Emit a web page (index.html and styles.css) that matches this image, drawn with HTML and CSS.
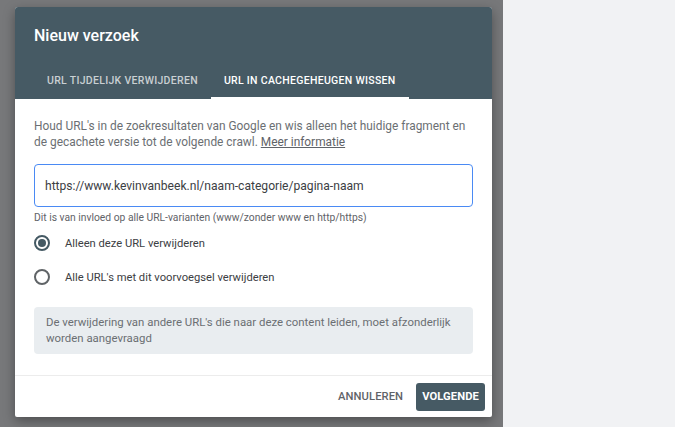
FILE: index.html
```html
<!DOCTYPE html>
<html lang="nl">
<head>
<meta charset="utf-8">
<title>Nieuw verzoek</title>
<link rel="stylesheet" href="styles.css">
</head>
<body>
<div class="page">
  <div class="backdrop">
    <div class="dialog">
      <div class="header">
        <h1 class="title">Nieuw verzoek</h1>
        <div class="tabs">
          <div class="tab">URL tijdelijk verwijderen</div>
          <div class="tab tab-active">URL in cachegeheugen wissen</div>
        </div>
      </div>
      <div class="body">
        <p class="intro">Houd URL's in de zoekresultaten van Google en wis alleen het huidige fragment en de gecachete versie tot de volgende crawl. <a class="link" href="#">Meer informatie</a></p>
        <div class="field">https://www.kevinvanbeek.nl/naam-categorie/pagina-naam</div>
        <div class="hint">Dit is van invloed op alle URL-varianten (www/zonder www en http/https)</div>
        <div class="options">
          <label class="option"><span class="radio radio-on"></span><span class="option-label">Alleen deze URL verwijderen</span></label>
          <label class="option"><span class="radio"></span><span class="option-label">Alle URL's met dit voorvoegsel verwijderen</span></label>
        </div>
        <div class="note">De verwijdering van andere URL's die naar deze content leiden, moet afzonderlijk worden aangevraagd</div>
      </div>
      <div class="footer">
        <button class="btn btn-text">Annuleren</button>
        <button class="btn btn-primary">Volgende</button>
      </div>
    </div>
  </div>
  <div class="side"></div>
</div>
</body>
</html>
```
FILE: styles.css
```css
* { box-sizing: border-box; }
html, body { margin: 0; padding: 0; }
body {
  width: 675px;
  height: 427px;
  overflow: hidden;
  font-family: Roboto, "Liberation Sans", Arial, sans-serif;
}
.page {
  display: flex;
  height: 427px;
}
.backdrop {
  width: 503px;
  background: #77787a;
  padding: 7px 11px 0 15px;
}
.side {
  flex: 1;
  background: #f1f2f4;
}
.dialog {
  width: 477px;
  height: 410px;
  background: #fff;
  border-radius: 3px 3px 2px 2px;
  box-shadow: 0 4px 12px rgba(0,0,0,0.35);
  display: flex;
  flex-direction: column;
  overflow: hidden;
}
.header {
  background: #465a64;
  padding: 0 0 0 19px;
}
.title {
  margin: 0;
  padding: 18px 0 0;
  height: 55px;
  font-size: 16px;
  line-height: 21px;
  font-weight: 500;
  color: #fff;
}
.tabs {
  display: flex;
  height: 37px;
}
.tab {
  padding: 2px 13px 0;
  font-size: 10.5px;
  font-weight: 500;
  letter-spacing: 0.3px;
  text-transform: uppercase;
  color: rgba(255,255,255,0.72);
  display: flex;
  align-items: center;
  border-bottom: 2px solid transparent;
}
.tab-active {
  color: #fff;
  border-bottom-color: #fff;
}
.body {
  flex: 1;
  padding: 19px 19px 0;
}
.intro {
  margin: 0;
  font-size: 11.9px;
  line-height: 16px;
  color: #6b6f73;
}
.link {
  color: #5f6368;
  text-decoration: underline;
}
.field {
  margin-top: 14px;
  height: 43px;
  border: 1px solid #4a8af4;
  border-radius: 4px;
  padding: 0 10px;
  display: flex;
  align-items: center;
  font-size: 12.1px;
  color: #3c4043;
}
.hint {
  margin-top: 5px;
  font-size: 10.3px;
  line-height: 12px;
  color: #5f6368;
}
.options {
  margin-top: 9px;
  display: flex;
  flex-direction: column;
  gap: 14px;
}
.option {
  display: flex;
  align-items: center;
  height: 20px;
}
.radio {
  width: 16px;
  height: 16px;
  border: 2px solid #606467;
  border-radius: 50%;
  display: flex;
  align-items: center;
  justify-content: center;
  flex: none;
}
.radio-on {
  border-color: #455a64;
}
.radio-on::after {
  content: "";
  width: 8px;
  height: 8px;
  border-radius: 50%;
  background: #455a64;
}
.option-label {
  margin-left: 15px;
  font-size: 11.2px;
  color: #3c4043;
}
.note {
  margin-top: 20px;
  background: #e9edf0;
  border-radius: 4px;
  padding: 7px 12px 8px;
  font-size: 11.4px;
  line-height: 16px;
  color: #6b6f73;
}
.footer {
  height: 42px;
  border-top: 1px solid #ececec;
  display: flex;
  align-items: center;
  justify-content: flex-end;
  padding: 0 7px 0 0;
  gap: 5px;
}
.btn {
  font-family: inherit;
  font-size: 11.2px;
  font-weight: 500;
  text-transform: uppercase;
  border: none;
  height: 28px;
  border-radius: 3px;
  padding: 0 8px;
  letter-spacing: 0.1px;
}
.btn-text {
  background: transparent;
  color: #5f6368;
}
.btn-primary {
  background: #465a64;
  color: #fff;
  padding: 0 6px;
  font-weight: 700;
}
```
